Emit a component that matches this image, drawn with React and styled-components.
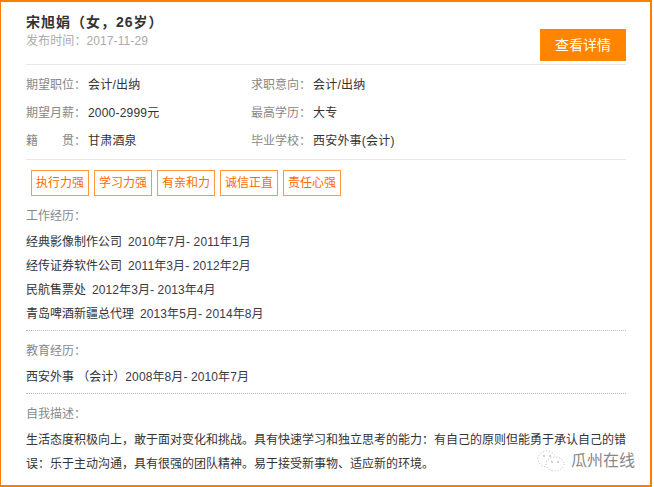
import React from 'react';
import styled, {createGlobalStyle} from 'styled-components';

const GlobalStyle = createGlobalStyle`
  html, body {
    margin: 0;
    padding: 0;
    background: #fff;
  }
  body {
    font-family: "Liberation Sans", "Noto Sans CJK SC", sans-serif;
    font-size: 12px;
    color: #333;
  }
`;

const Card = styled.div`
  position: relative;
  box-sizing: border-box;
  width: 652px;
  height: 487px;
  border: solid #ff7d00;
  border-width: 2px 2px 2px 1px;
  padding: 0 24px 0 25px;
  overflow: hidden;
`;

const EdgeGap = styled.div`
  position: absolute;
  left: -1px;
  top: 148px;
  width: 1px;
  height: 14px;
  background: #fff;
`;

const Header = styled.header`
  display: flex;
  justify-content: space-between;
  height: 63px;
  box-sizing: border-box;
  padding-top: 8px;
  border-bottom: 1px solid #e8e8e8;
`;

const Name = styled.h1`
  margin: 0;
  font-size: 14px;
  font-weight: bold;
  line-height: 24px;
  letter-spacing: 1px;
  color: #333;
`;

const Published = styled.div`
  line-height: 14px;
  color: #aaa;
  letter-spacing: 0.1px;
`;

const DetailButton = styled.a`
  align-self: flex-end;
  margin-bottom: 3px;
  width: 86px;
  height: 32px;
  line-height: 32px;
  text-align: center;
  font-size: 14px;
  color: #fff;
  background: #ff8400;
`;

const Fields = styled.div`
  display: grid;
  grid-template-columns: 225px 1fr;
  padding: 6px 0 4px;
  border-bottom: 1px solid #e8e8e8;
`;

const Field = styled.div`
  display: flex;
  line-height: 28px;
`;

const FieldLabel = styled.span`
  width: 62px;
  color: #888;
`;

const FieldValue = styled.span`
  letter-spacing: 0.2px;
`;

const TagRow = styled.div`
  display: flex;
  gap: 5px;
  padding: 10px 0 0 5px;
`;

const Tag = styled.span`
  box-sizing: border-box;
  width: 58px;
  height: 26px;
  line-height: 24px;
  text-align: center;
  color: #ff6a00;
  border: 1px solid #ff9a3c;
`;

const Section = styled.section`
  padding: 8px 0 4px;
  border-bottom: ${props => (props.$last ? 'none' : '1px dotted #bbb')};
`;

const SectionTitle = styled.div`
  line-height: 24px;
  color: #888;
  margin-bottom: 2px;
`;

const Line = styled.div`
  width: fit-content;
  line-height: 24px;
  color: #333;
`;

const Period = styled.span`
  margin-left: ${props => props.$gap || 0}px;
  color: #3a3a4a;
  letter-spacing: 0.1px;
`;

const Watermark = styled.div`
  position: absolute;
  left: 536px;
  top: 448px;
  display: flex;
  align-items: center;
  gap: 6px;
  height: 22px;
  color: #888;
  font-size: 16px;
  line-height: 18px;
`;

const jobs = [
    ['经典影像制作公司', '2010年7月- 2011年1月'],
    ['经传证券软件公司', '2011年3月- 2012年2月'],
    ['民航售票处', '2012年3月- 2013年4月'],
    ['青岛啤酒新疆总代理', '2013年5月- 2014年8月'],
];

const fields = [
    ['期望职位：', '会计/出纳'],
    ['求职意向：', '会计/出纳'],
    ['期望月薪：', '2000-2999元'],
    ['最高学历：', '大专'],
    ['籍\u3000\u3000贯：', '甘肃酒泉'],
    ['毕业学校：', '西安外事(会计)'],
];

const tags = ['执行力强', '学习力强', '有亲和力', '诚信正直', '责任心强'];

const WechatMark = () => (
    <svg width="28" height="22" viewBox="0 0 28 22" fill="none" stroke="#bbb" strokeWidth="1" strokeDasharray="1 2">
        <ellipse cx="10" cy="9" rx="9" ry="8"/>
        <ellipse cx="18" cy="14" rx="9" ry="7" fill="#fff"/>
        <circle cx="7" cy="6" r="0.8" fill="#999" stroke="none"/>
        <circle cx="13" cy="6" r="0.8" fill="#999" stroke="none"/>
        <circle cx="15" cy="12" r="0.8" fill="#999" stroke="none"/>
        <circle cx="21" cy="12" r="0.8" fill="#999" stroke="none"/>
    </svg>
);

export default function App() {
    return (
        <Card>
            <GlobalStyle/>
            <EdgeGap/>
            <Header>
                <div>
                    <Name>宋旭娟（女，26岁）</Name>
                    <Published>发布时间：2017-11-29</Published>
                </div>
                <DetailButton>查看详情</DetailButton>
            </Header>
            <Fields>
                {fields.map(([label, value]) => (
                    <Field key={label}>
                        <FieldLabel>{label}</FieldLabel>
                        <FieldValue>{value}</FieldValue>
                    </Field>
                ))}
            </Fields>
            <TagRow>
                {tags.map(tag => <Tag key={tag}>{tag}</Tag>)}
            </TagRow>
            <Section>
                <SectionTitle>工作经历：</SectionTitle>
                {jobs.map(([company, period]) => (
                    <Line key={company}>{company}<Period $gap={6}>{period}</Period></Line>
                ))}
            </Section>
            <Section>
                <SectionTitle>教育经历：</SectionTitle>
                <Line>西安外事 （会计）<Period>2008年8月- 2010年7月</Period></Line>
            </Section>
            <Section $last>
                <SectionTitle>自我描述：</SectionTitle>
                <Line>生活态度积极向上，敢于面对变化和挑战。具有快速学习和独立思考的能力：有自己的原则但能勇于承认自己的错</Line>
                <Line>误：乐于主动沟通，具有很强的团队精神。易于接受新事物、适应新的环境。</Line>
            </Section>
            <Watermark>
                <WechatMark/>
                <span>瓜州在线</span>
            </Watermark>
        </Card>
    );
}
